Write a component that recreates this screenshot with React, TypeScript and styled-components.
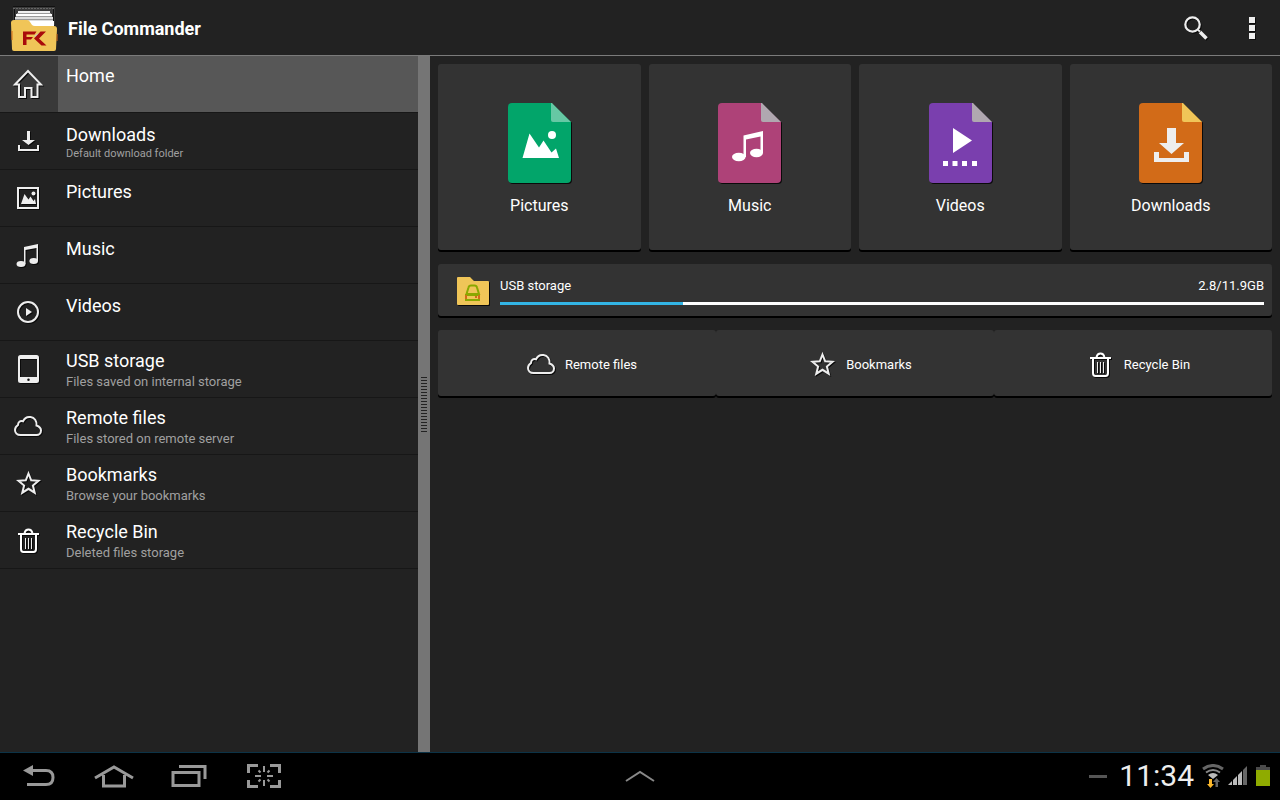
import React from "react";
import styled, { createGlobalStyle } from "styled-components";

const GlobalStyle = createGlobalStyle`
  *, *::before, *::after { box-sizing: border-box; }
  body {
    margin: 0;
    background: #222;
    color: #fff;
    font-family: Roboto, "Liberation Sans", sans-serif;
  }
  button { font: inherit; color: inherit; background: none; border: 0; padding: 0; cursor: pointer; }
  a { color: inherit; text-decoration: none; }
  svg { display: block; flex: none; }
`;

const Page = styled.div`
  display: flex;
  flex-direction: column;
  min-height: 100vh;
`;

const Header = styled.header`
  display: flex;
  align-items: center;
  height: 56px;
  padding-left: 10px;
  border-bottom: 1px solid #7b7b7b;
`;

const AppTitle = styled.h1`
  flex: 1;
  margin: 0 0 0 10px;
  padding-top: 2px;
  font-size: 18px;
  line-height: 24px;
  font-weight: 700;
`;

const HeaderButton = styled.button`
  display: flex;
  align-items: center;
  justify-content: center;
  width: 56px;
  height: 48px;
`;

const Body = styled.div`
  display: flex;
  flex: 1;
`;

const Sidebar = styled.nav`
  flex: 0 0 418px;
`;

const PlaceList = styled.ul`
  margin: 0;
  padding: 0;
  list-style: none;
`;

const PlaceLink = styled.a<{ $active?: boolean }>`
  display: flex;
  height: 57px;
  border-bottom: 1px solid #171717;
  background: ${(p) => (p.$active ? "#575757" : "transparent")};
`;

const PlaceIcon = styled.span<{ $active?: boolean }>`
  display: flex;
  align-items: center;
  width: 58px;
  padding-left: 12px;
  background: ${(p) => (p.$active ? "#393939" : "transparent")};
`;

const PlaceText = styled.span`
  display: flex;
  flex-direction: column;
  justify-content: center;
  padding: 2px 0 0 8px;
`;

const PlaceName = styled.span`
  font-size: 18px;
  line-height: 24px;
`;

const PlaceNote = styled.span<{ $small?: boolean }>`
  color: #a0a0a0;
  font-size: ${(p) => (p.$small ? 11 : 13)}px;
  line-height: ${(p) => (p.$small ? 14 : 18)}px;
  min-height: ${(p) => (p.$small ? 14 : 18)}px;
`;

const Divider = styled.div`
  display: flex;
  align-items: center;
  justify-content: center;
  flex: 0 0 12px;
  background: #757575;
`;

const Grip = styled.span`
  width: 6px;
  height: 55px;
  background: repeating-linear-gradient(#222 0 1px, transparent 1px 3px);
`;

const Main = styled.main`
  display: flex;
  flex-direction: column;
  flex: 1;
  gap: 14px;
  padding: 8px;
`;

const Card = styled.section`
  background: #333;
  border-radius: 3px;
  box-shadow: 0 2px 0 #000;
`;

const CategoryGrid = styled.div`
  display: grid;
  grid-template-columns: repeat(4, 1fr);
  gap: 8px;
`;

const Category = styled(Card).attrs({ as: "button" })`
  display: flex;
  flex-direction: column;
  align-items: center;
  gap: 11px;
  height: 186px;
  padding-top: 39px;
  background: #333;
  font-size: 16px;
  line-height: 24px;
`;

const StorageCard = styled(Card)`
  display: flex;
  align-items: center;
  gap: 11px;
  height: 52px;
  padding: 0 8px 0 19px;
`;

const StorageInfo = styled.div`
  flex: 1;
  padding-top: 1px;
`;

const StorageLabels = styled.div`
  display: flex;
  justify-content: space-between;
  margin-bottom: 6px;
  font-size: 13px;
  line-height: 20px;
`;

const StorageBar = styled.progress`
  display: block;
  appearance: none;
  width: 100%;
  height: 3px;
  border: 0;
  background: #fff;
  &::-webkit-progress-bar { background: #fff; }
  &::-webkit-progress-value { background: #33b5e5; }
`;

const ActionGrid = styled.div`
  display: grid;
  grid-template-columns: repeat(3, 1fr);
`;

const Action = styled(Card).attrs({ as: "button" })`
  display: flex;
  align-items: center;
  justify-content: center;
  gap: 8px;
  height: 66px;
  padding: 2px 0 0 8px;
  background: #333;
`;

const ActionLabel = styled.span`
  padding-top: 2px;
  font-size: 13px;
  line-height: 20px;
`;

const SystemBar = styled.footer`
  display: grid;
  grid-template-columns: 1fr auto 1fr;
  align-items: start;
  height: 48px;
  border-top: 1px solid #0c3347;
  background: #000;
  color: #999;
`;

const SystemKeys = styled.div`
  display: flex;
  padding-left: 1px;
`;

const SystemKey = styled.button`
  display: flex;
  align-items: center;
  justify-content: center;
  width: 75px;
  height: 46px;
`;

const StatusArea = styled.div`
  display: flex;
  align-items: center;
  justify-content: flex-end;
  height: 46px;
  padding-right: 10px;
`;

const Clock = styled.time`
  margin: 0 8px 0 12px;
  color: #eee;
  font-size: 30px;
  line-height: 36px;
`;

const StatusIcons = styled.div`
  display: flex;
  align-items: center;
  gap: 4px;
`;

const LineSvg = styled.svg`
  overflow: visible;
  filter: drop-shadow(1px 1px 0 #0a0a0a);
`;

type IconName = "home" | "download" | "picture" | "music" | "video" | "tablet" | "cloud" | "star" | "trash";

const shapes: Record<IconName, React.ReactNode> = {
  home: (
    <path
      d="M3 16.500 16 3l13 13.500h-3.500V29h-6v-9h-6.500v9h-6V16.500Z"
      fill="none"
      stroke="#eee"
      strokeWidth="2"
    />
  ),
  download: (
    <path d="M15 6h3v9h5l-6.500 5L10 15h5ZM6 20h2v4h17v-4h2v6H6Z" fill="#eee" />
  ),
  picture: (
    <>
      <path d="M6 6h20v20H6Z" fill="none" stroke="#eee" strokeWidth="2" />
      <path d="m9 22 3.500-10 4 5.500 2-3 3 4.500 1.500-2 1 5Z" fill="#eee" />
      <circle cx="21.500" cy="11.500" r="2" fill="#eee" />
    </>
  ),
  music: (
    <g fill="#eee">
      <path d="m12 8 14-3v17h-1.500V9L13.500 11v14H12Z" />
      <ellipse cx="9" cy="25" rx="4.500" ry="3" />
      <ellipse cx="21.700" cy="22" rx="4.300" ry="3" />
    </g>
  ),
  video: (
    <>
      <circle cx="16" cy="16" r="10" fill="none" stroke="#eee" strokeWidth="2" />
      <path d="m14 12 6 4-6 4Z" fill="#eee" />
    </>
  ),
  tablet: (
    <path
      d="M8.500 2h16a2.500 2.500 0 0 1 2.500 2.500v23a2.500 2.500 0 0 1-2.500 2.500h-16A2.500 2.500 0 0 1 6 27.500v-23A2.500 2.500 0 0 1 8.500 2ZM8 6v18h17V6Zm8.500 19.500a1.200 1.200 0 1 0 0 2.500 1.200 1.200 0 0 0 0-2.500Z"
      fill="#eee"
      fillRule="evenodd"
    />
  ),
  cloud: (
    <path
      d="M8.500 25C5 25 3 22.500 3 20c0-2.500 1.500-4 3-5 0-3 2-4.500 5-3.700C12.500 8 15 6.500 18.500 7c4 .5 6.500 4 6 8.500 2 .7 4.500 2 4.500 5 0 2.700-2 4.500-4.500 4.500Z"
      fill="none"
      stroke="#eee"
      strokeWidth="2"
    />
  ),
  star: (
    <path
      d="m16.500 6.500 2.700 6.800 7.300.5-5.600 4.800 1.800 7.100-6.200-3.900-6.200 3.900 1.800-7.100-5.600-4.800 7.300-.5Z"
      fill="none"
      stroke="#eee"
      strokeWidth="2"
    />
  ),
  trash: (
    <>
      <path d="M6 10h21M12.500 9c.5-2 2-3.500 4-3.500s3.500 1.500 4 3.500" fill="none" stroke="#fff" strokeWidth="2" />
      <path d="M9 11v14q0 3 2.500 3h10q2.500 0 2.500-3V11" fill="none" stroke="#fff" strokeWidth="2" />
      <path d="M13.500 14v11M16.500 14v11M19.500 14v11" stroke="#eee" />
    </>
  ),
};

function LineIcon({ name }: { name: IconName }) {
  return (
    <LineSvg width="32" height="32" viewBox="0 0 32 32" aria-hidden="true">
      {shapes[name]}
    </LineSvg>
  );
}

type FileKind = "pictures" | "music" | "videos" | "downloads";

const fileStyles: Record<FileKind, { paper: string; fold: string; art: React.ReactNode }> = {
  pictures: {
    paper: "#02a56a",
    fold: "#66c8a4",
    art: (
      <>
        <path d="m14.500 55 7-24.500L31 44.500l4.500-7 8 12 4.500-4 3 9.500Z" />
        <circle cx="44" cy="32" r="4" />
      </>
    ),
  },
  music: {
    paper: "#ae4278",
    fold: "#b0a8b0",
    art: (
      <>
        <path d="m25.500 32.500 19.500-4.500v22h-2.500V33.500L28 36.500V54h-2.500Z" />
        <ellipse cx="20.800" cy="54" rx="6.800" ry="4.200" />
        <ellipse cx="38.500" cy="50" rx="6.500" ry="4.200" />
      </>
    ),
  },
  videos: {
    paper: "#7a3fae",
    fold: "#b0a8b0",
    art: <path d="m24 25 19 12.500L24 50ZM14 58h5v5h-5Zm9.500 0h5v5h-5Zm9.500 0h5v5h-5Zm10 0h5v5h-5Z" />,
  },
  downloads: {
    paper: "#d26b18",
    fold: "#f0c558",
    art: <path fill="#eee" d="M28 25h9v15h8L32.500 51 20 40h8ZM15 49h5v6h25v-6h5v10H15Z" />,
  },
};

function FileIcon({ kind }: { kind: FileKind }) {
  const { paper, fold, art } = fileStyles[kind];
  return (
    <LineSvg width="63" height="80" viewBox="0 0 63 80" aria-hidden="true">
      <path d="M4 0h39l20 19v57a4 4 0 0 1-4 4H4a4 4 0 0 1-4-4V4a4 4 0 0 1 4-4Z" fill={paper} />
      <path d="M43 0v17q0 2 2 2h18L44 0Z" fill={fold} />
      <g fill="#fff">{art}</g>
    </LineSvg>
  );
}

function AppLogo() {
  return (
    <svg width="48" height="48" viewBox="0 0 48 48" aria-hidden="true">
      <path d="M3 3h42v18H3Z" fill="#3a3a3a" />
      <path d="M3 4.500h42" stroke="#666" strokeDasharray="2 1" />
      <path d="M3 2.500h42M4.500 5v14M43.500 5v14" stroke="#111" />
      <path d="M8 7h32v3H8Z" fill="#eee" />
      <path d="M6 10h36v3H6Z" fill="#fff" />
      <path d="M5 13h38v8H5Z" fill="#ddd" />
      <path d="M7 9.500h34M6 12.500h36M5 15.500h38" stroke="#999" />
      <path d="M18 17h26v6H22Z" fill="#fff" />
      <path d="M1 19q0-3 3-3h13q2 0 3 2l2 3q1 1 3 1h19q3 0 3 3l-1 20q0 2-2 2H4q-2 0-2-2Z" fill="#f0c558" />
      <path d="M2 27v9M47 30v7" stroke="#d26b18" />
      <path d="M13 27.500h13.500l-2 3H16.500V33h6.500l-2 2.500h-4.500V41H13Z" fill="#a90b0b" />
      <path d="m24 32 5-3h5l-7 4.500Z" fill="#ccc" />
      <path d="M35.500 27.500h-5L24 34.500l7.500 7h5l-7.500-7 7-7Z" fill="#a90b0b" />
    </svg>
  );
}

function StorageIcon() {
  return (
    <LineSvg width="32" height="30" viewBox="0 -2 32 30" aria-hidden="true">
      <path d="M1 0h12l4 4h14q1 0 1 1v22q0 1-1 1H1q-1 0-1-1V1q0-1 1-1Z" fill="#f0c558" />
      <path d="m9.500 17 2-6.500Q12 8.500 14 8.500h3.500q2 0 2.500 2l2 6.500Z" fill="none" stroke="#8aa800" strokeWidth="2" />
      <path d="M9 18h13v5H9Z" fill="none" stroke="#8aa800" strokeWidth="2" />
      <path d="M9 18v4M22 18v4M18 20h2" stroke="#d26b18" strokeWidth="2" />
    </LineSvg>
  );
}

interface Place {
  name: string;
  icon: IconName;
  note?: string;
  small?: boolean;
  active?: boolean;
}

const places: Place[] = [
  { name: "Home", icon: "home", active: true },
  { name: "Downloads", icon: "download", note: "Default download folder", small: true },
  { name: "Pictures", icon: "picture", small: true },
  { name: "Music", icon: "music", small: true },
  { name: "Videos", icon: "video", small: true },
  { name: "USB storage", icon: "tablet", note: "Files saved on internal storage" },
  { name: "Remote files", icon: "cloud", note: "Files stored on remote server" },
  { name: "Bookmarks", icon: "star", note: "Browse your bookmarks" },
  { name: "Recycle Bin", icon: "trash", note: "Deleted files storage" },
];

const categories: { kind: FileKind; label: string }[] = [
  { kind: "pictures", label: "Pictures" },
  { kind: "music", label: "Music" },
  { kind: "videos", label: "Videos" },
  { kind: "downloads", label: "Downloads" },
];

const actions: { icon: IconName; label: string }[] = [
  { icon: "cloud", label: "Remote files" },
  { icon: "star", label: "Bookmarks" },
  { icon: "trash", label: "Recycle Bin" },
];

export default function App() {
  return (
    <Page>
      <GlobalStyle />
      <Header>
        <AppLogo />
        <AppTitle>File Commander</AppTitle>
        <HeaderButton aria-label="Search">
          <LineSvg width="24" height="24" viewBox="0 0 24 24" aria-hidden="true">
            <circle cx="8.500" cy="8.500" r="7.200" fill="none" stroke="#eee" strokeWidth="2.200" />
            <path d="m14 14 2 1.500" stroke="#eee" strokeWidth="2" />
            <path d="m16 16 6.500 6.500" stroke="#eee" strokeWidth="3.500" />
          </LineSvg>
        </HeaderButton>
        <HeaderButton aria-label="More options">
          <LineSvg width="6" height="22" viewBox="0 0 6 22" aria-hidden="true">
            <path d="M0 0h6v6H0ZM0 8h6v6H0ZM0 16h6v6H0Z" fill="#eee" />
          </LineSvg>
        </HeaderButton>
      </Header>

      <Body>
        <Sidebar aria-label="Places">
          <PlaceList>
            {places.map((p) => (
              <li key={p.name}>
                <PlaceLink href="#" $active={p.active} aria-current={p.active ? "page" : undefined}>
                  <PlaceIcon $active={p.active}>
                    <LineIcon name={p.icon} />
                  </PlaceIcon>
                  <PlaceText>
                    <PlaceName>{p.name}</PlaceName>
                    <PlaceNote $small={p.small}>{p.note}</PlaceNote>
                  </PlaceText>
                </PlaceLink>
              </li>
            ))}
          </PlaceList>
        </Sidebar>
        <Divider role="separator" aria-orientation="vertical">
          <Grip />
        </Divider>

        <Main>
          <CategoryGrid>
            {categories.map((c) => (
              <Category key={c.kind}>
                <FileIcon kind={c.kind} />
                {c.label}
              </Category>
            ))}
          </CategoryGrid>

          <StorageCard>
            <StorageIcon />
            <StorageInfo>
              <StorageLabels>
                <label htmlFor="usb-usage">USB storage</label>
                <span>2.8/11.9GB</span>
              </StorageLabels>
              <StorageBar id="usb-usage" max={100} value={24} />
            </StorageInfo>
          </StorageCard>

          <ActionGrid>
            {actions.map((a) => (
              <Action key={a.label}>
                <LineIcon name={a.icon} />
                <ActionLabel>{a.label}</ActionLabel>
              </Action>
            ))}
          </ActionGrid>
        </Main>
      </Body>

      <SystemBar>
        <SystemKeys>
          <SystemKey aria-label="Back">
            <svg width="32" height="24" viewBox="0 0 32 24" fill="none" stroke="#999" strokeWidth="3">
              <path d="M9 6.500h14q7 0 7 7t-7 7H4" />
              <path d="M0 6.500 10 1v11Z" fill="#999" stroke="none" />
            </svg>
          </SystemKey>
          <SystemKey aria-label="Home screen">
            <svg width="40" height="24" viewBox="0 0 40 24" fill="none" stroke="#999" strokeWidth="3">
              <path d="M1 14 20 3l19 11M9.500 11v11h21V11" />
            </svg>
          </SystemKey>
          <SystemKey aria-label="Recent apps">
            <svg width="36" height="24" viewBox="0 0 36 24" fill="none" stroke="#999" strokeWidth="3">
              <path d="M2 8.500h26v13H2ZM8 2.500h26V15" />
            </svg>
          </SystemKey>
          <SystemKey aria-label="Take screenshot">
            <svg width="34" height="24" viewBox="0 0 34 24" fill="none" stroke="#999">
              <path d="M1.500 9V1.500H11M23 1.500h9.500V9M32.500 16v6.500H23M11 22.500H1.500V16" strokeWidth="3" />
              <path d="M17 2v6M17 16v6M8 12h6M20 12h6M11.500 6.500l2 2M22.500 6.500l-2 2M11.500 17.500l2-2M22.500 17.500l-2-2" strokeWidth="2" />
            </svg>
          </SystemKey>
        </SystemKeys>
        <SystemKey aria-label="Open mini apps">
          <svg width="30" height="12" viewBox="0 0 30 12" fill="none" stroke="#888" strokeWidth="2">
            <path d="m1 11 14-9 14 9" />
          </svg>
        </SystemKey>
        <StatusArea>
          <svg width="18" height="3" viewBox="0 0 18 3" aria-hidden="true">
            <path d="M0 0h18v3H0Z" fill="#555" />
          </svg>
          <Clock>11:34</Clock>
          <StatusIcons>
            <svg width="22" height="24" viewBox="0 0 22 24" fill="none" aria-label="Wi-Fi" role="img">
              <path d="M1 5q10-7 20 0" stroke="#666" strokeWidth="3" />
              <path d="M4 8.500q7-5 14 0" stroke="#888" strokeWidth="2" />
              <path d="M6 11q5-4 10 0l-5 4Z" fill="#bbb" />
              <path d="M7 15h3v5h2l-3.500 4L5 20h2Z" fill="#fdb92c" />
              <path d="M13.500 23v-5H11l3.500-4 3.500 4h-2v5Z" fill="#666" />
            </svg>
            <svg width="20" height="20" viewBox="0 0 20 20" aria-label="Signal" role="img">
              <path d="M0 19 4 15v4ZM5 14l4-4v9H5ZM10 9l4-4v14h-4Z" fill="#bbb" />
              <path d="m15 4 4-4v19h-4Z" fill="#666" />
            </svg>
            <svg width="18" height="22" viewBox="4 0 18 22" aria-label="Battery" role="img">
              <path d="M12 0h6v2h4v4H8V2h4Z" fill="#4a4a4a" />
              <path d="M8 5h14v16H8Z" fill="#8fab00" />
            </svg>
          </StatusIcons>
        </StatusArea>
      </SystemBar>
    </Page>
  );
}
